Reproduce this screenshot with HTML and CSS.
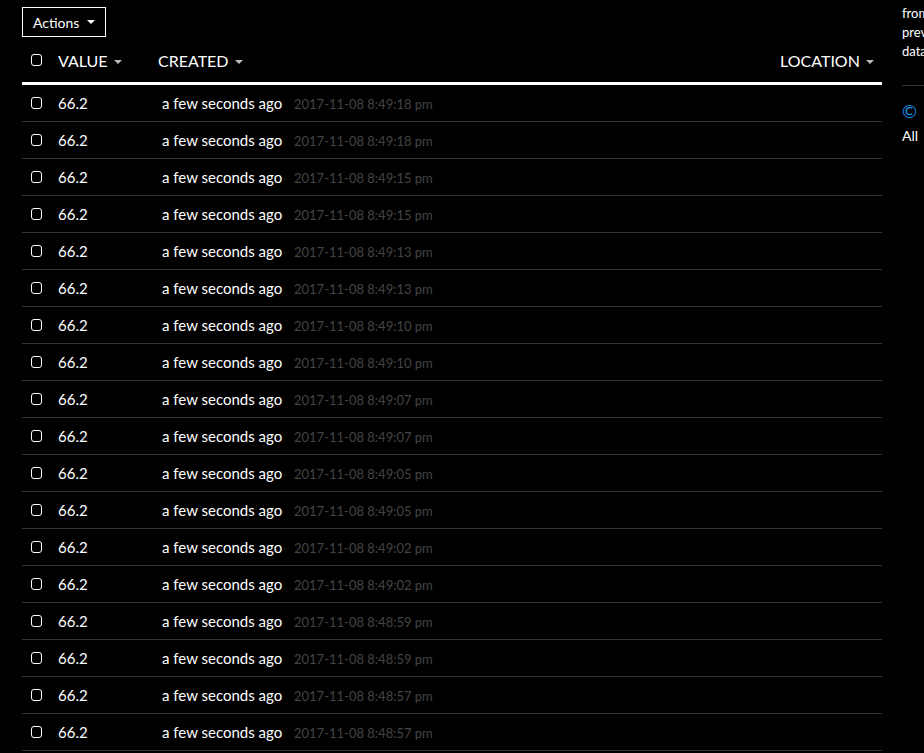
FILE: index.html
```html
<!DOCTYPE html>
<html lang="en">
<head>
    <meta charset="UTF-8">
    <meta name="viewport" content="width=device-width, initial-scale=1.0">
    <title>Readings</title>
    <link rel="stylesheet" href="styles.css">
</head>
<body>
    <div class="page">
        <div class="main">
            <div class="toolbar">
                <button class="actions-btn">Actions <span class="caret caret-white"></span></button>
            </div>
            <div class="grid">
                <div class="grid-head">
                    <span class="cell cell-check"><span class="checkbox"></span></span>
                    <span class="cell cell-value">VALUE <span class="caret"></span></span>
                    <span class="cell cell-created">CREATED <span class="caret"></span></span>
                    <span class="cell cell-location">LOCATION <span class="caret"></span></span>
                </div>
                <div class="grid-row"><span class="cell cell-check"><span class="checkbox"></span></span><span class="cell cell-value">66.2</span><span class="cell cell-created">a few seconds ago <span class="stamp">2017-11-08 8:49:18 pm</span></span></div>
                <div class="grid-row"><span class="cell cell-check"><span class="checkbox"></span></span><span class="cell cell-value">66.2</span><span class="cell cell-created">a few seconds ago <span class="stamp">2017-11-08 8:49:18 pm</span></span></div>
                <div class="grid-row"><span class="cell cell-check"><span class="checkbox"></span></span><span class="cell cell-value">66.2</span><span class="cell cell-created">a few seconds ago <span class="stamp">2017-11-08 8:49:15 pm</span></span></div>
                <div class="grid-row"><span class="cell cell-check"><span class="checkbox"></span></span><span class="cell cell-value">66.2</span><span class="cell cell-created">a few seconds ago <span class="stamp">2017-11-08 8:49:15 pm</span></span></div>
                <div class="grid-row"><span class="cell cell-check"><span class="checkbox"></span></span><span class="cell cell-value">66.2</span><span class="cell cell-created">a few seconds ago <span class="stamp">2017-11-08 8:49:13 pm</span></span></div>
                <div class="grid-row"><span class="cell cell-check"><span class="checkbox"></span></span><span class="cell cell-value">66.2</span><span class="cell cell-created">a few seconds ago <span class="stamp">2017-11-08 8:49:13 pm</span></span></div>
                <div class="grid-row"><span class="cell cell-check"><span class="checkbox"></span></span><span class="cell cell-value">66.2</span><span class="cell cell-created">a few seconds ago <span class="stamp">2017-11-08 8:49:10 pm</span></span></div>
                <div class="grid-row"><span class="cell cell-check"><span class="checkbox"></span></span><span class="cell cell-value">66.2</span><span class="cell cell-created">a few seconds ago <span class="stamp">2017-11-08 8:49:10 pm</span></span></div>
                <div class="grid-row"><span class="cell cell-check"><span class="checkbox"></span></span><span class="cell cell-value">66.2</span><span class="cell cell-created">a few seconds ago <span class="stamp">2017-11-08 8:49:07 pm</span></span></div>
                <div class="grid-row"><span class="cell cell-check"><span class="checkbox"></span></span><span class="cell cell-value">66.2</span><span class="cell cell-created">a few seconds ago <span class="stamp">2017-11-08 8:49:07 pm</span></span></div>
                <div class="grid-row"><span class="cell cell-check"><span class="checkbox"></span></span><span class="cell cell-value">66.2</span><span class="cell cell-created">a few seconds ago <span class="stamp">2017-11-08 8:49:05 pm</span></span></div>
                <div class="grid-row"><span class="cell cell-check"><span class="checkbox"></span></span><span class="cell cell-value">66.2</span><span class="cell cell-created">a few seconds ago <span class="stamp">2017-11-08 8:49:05 pm</span></span></div>
                <div class="grid-row"><span class="cell cell-check"><span class="checkbox"></span></span><span class="cell cell-value">66.2</span><span class="cell cell-created">a few seconds ago <span class="stamp">2017-11-08 8:49:02 pm</span></span></div>
                <div class="grid-row"><span class="cell cell-check"><span class="checkbox"></span></span><span class="cell cell-value">66.2</span><span class="cell cell-created">a few seconds ago <span class="stamp">2017-11-08 8:49:02 pm</span></span></div>
                <div class="grid-row"><span class="cell cell-check"><span class="checkbox"></span></span><span class="cell cell-value">66.2</span><span class="cell cell-created">a few seconds ago <span class="stamp">2017-11-08 8:48:59 pm</span></span></div>
                <div class="grid-row"><span class="cell cell-check"><span class="checkbox"></span></span><span class="cell cell-value">66.2</span><span class="cell cell-created">a few seconds ago <span class="stamp">2017-11-08 8:48:59 pm</span></span></div>
                <div class="grid-row"><span class="cell cell-check"><span class="checkbox"></span></span><span class="cell cell-value">66.2</span><span class="cell cell-created">a few seconds ago <span class="stamp">2017-11-08 8:48:57 pm</span></span></div>
                <div class="grid-row"><span class="cell cell-check"><span class="checkbox"></span></span><span class="cell cell-value">66.2</span><span class="cell cell-created">a few seconds ago <span class="stamp">2017-11-08 8:48:57 pm</span></span></div>
            </div>
        </div>
        <div class="sidebar">
            <p class="blurb">from<br>prev<br>data</p>
            <hr class="rule">
            <p class="copy"><span class="copy-mark">&copy;</span></p>
            <p class="rights">All</p>
        </div>
    </div>
</body>
</html>
```

FILE: styles.css
```css
html, body {
    margin: 0;
    padding: 0;
    background-color: #000;
    color: #fff;
    font-family: Lato, "Open Sans", sans-serif;
    overflow: hidden;
}

.page {
    display: flex;
    gap: 20px;
    padding-left: 22px;
}

.main {
    width: 860px;
    flex: none;
}

.toolbar {
    padding-top: 7px;
}

.actions-btn {
    height: 30px;
    padding: 0 10px;
    background: #000;
    color: #fff;
    border: 1px solid #fff;
    font-family: inherit;
    font-size: 14px;
    display: flex;
    align-items: center;
    gap: 6px;
}

.caret {
    display: inline-block;
    width: 0;
    height: 0;
    border-left: 4px solid transparent;
    border-right: 4px solid transparent;
    border-top: 4px solid #bbb;
    vertical-align: middle;
    margin-left: 2px;
}

.caret-white {
    border-top-color: #fff;
}

.grid-head {
    display: flex;
    align-items: center;
    height: 48px;
    padding-top: 1px;
    box-sizing: border-box;
    border-bottom: 3px solid #fff;
    font-size: 16px;
}

.grid-row {
    display: flex;
    align-items: center;
    height: 37px;
    box-sizing: border-box;
    border-bottom: 1px solid #333;
    font-size: 15px;
}

.cell-check {
    width: 27px;
    padding-left: 9px;
    display: flex;
    align-items: center;
}

.checkbox {
    width: 9px;
    height: 10px;
    border: 1.5px solid #fff;
    border-radius: 3px;
}

.cell-value {
    width: 100px;
}

.grid-row .cell-created {
    padding-left: 4px;
}

.stamp {
    color: #444;
    font-size: 13px;
    margin-left: 8px;
}

.cell-location {
    margin-left: auto;
    padding-right: 8px;
}

.sidebar {
    width: 22px;
    flex: none;
    font-size: 13px;
    overflow: hidden;
    white-space: nowrap;
}

.blurb {
    margin: 4px 0 0;
    line-height: 19px;
}

.rule {
    border: none;
    border-top: 1px solid #333;
    margin: 24px 0 0;
}

.copy {
    margin: 14px 0 0;
    font-size: 13px;
}

.copy-mark {
    color: #1a8fe0;
    font-size: 18px;
}

.rights {
    margin: 5px 0 0;
    font-size: 14px;
}
```
